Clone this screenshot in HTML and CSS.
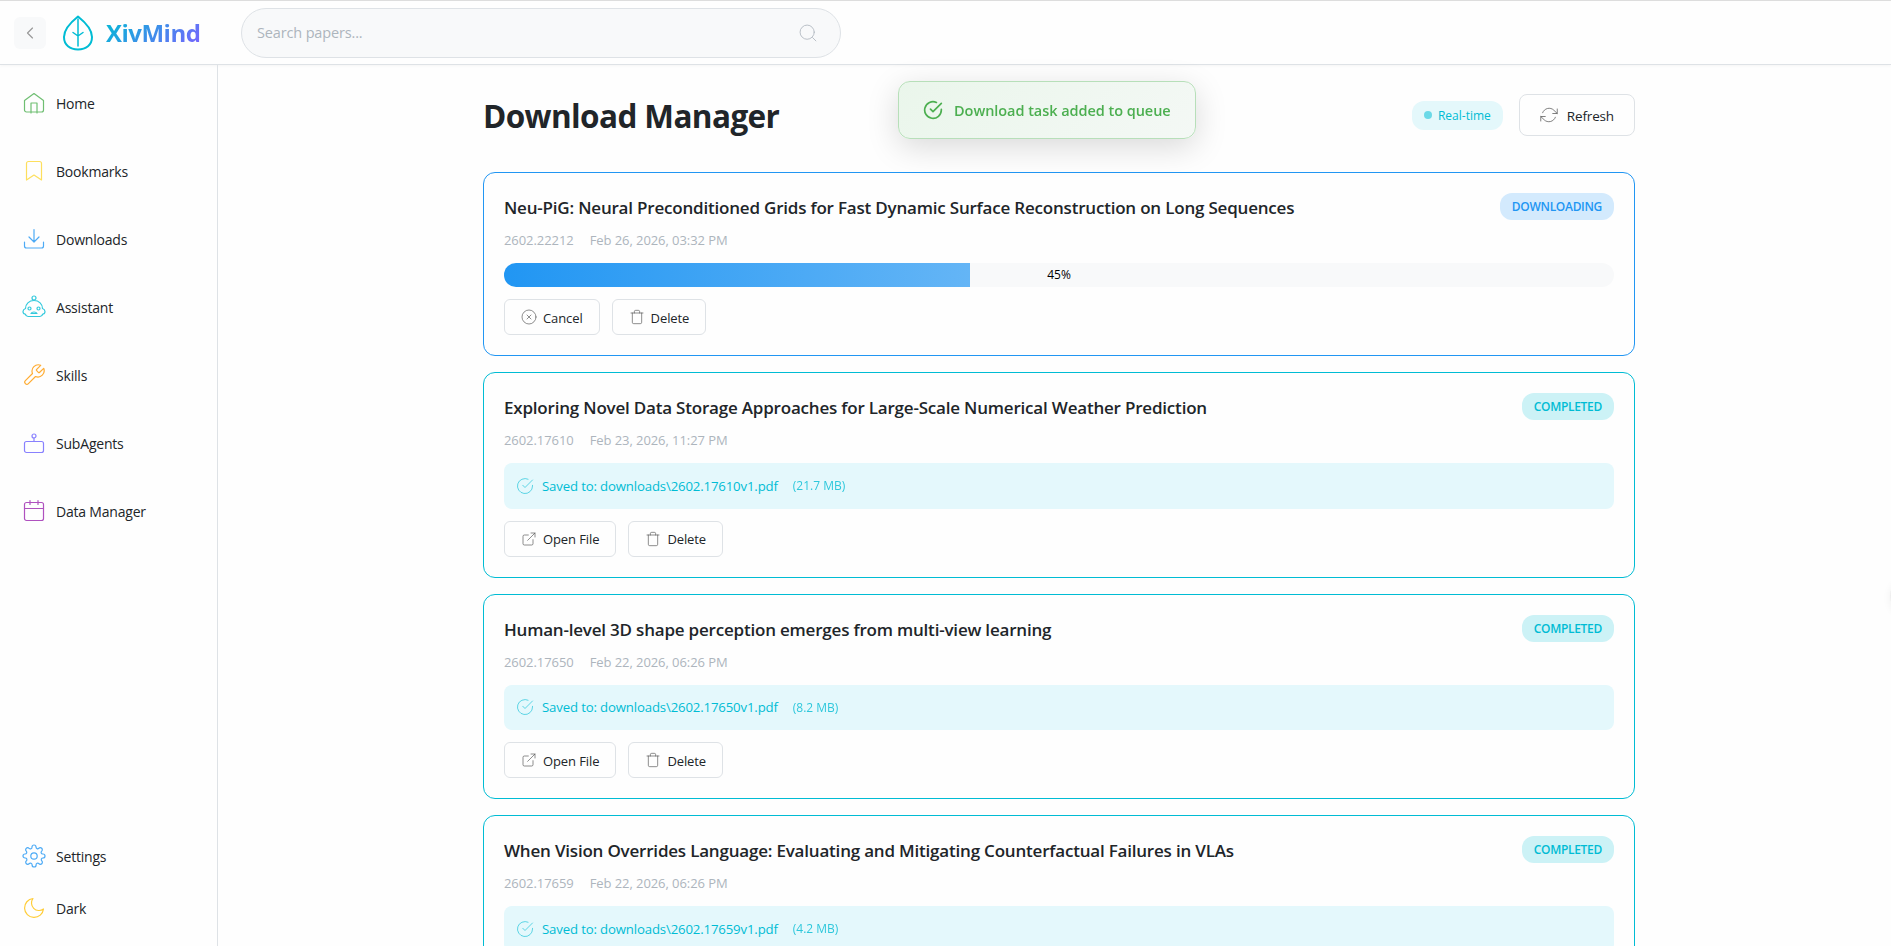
FILE: index.html
```html
<!DOCTYPE html>
<html lang="en">
<head>
<meta charset="utf-8">
<title>XivMind - Download Manager</title>
<link rel="stylesheet" href="styles.css">
</head>
<body>

<!-- shared icons -->
<svg class="sprite" width="0" height="0">
	<symbol id="i-check" viewBox="0 0 24 24"><path d="M22 11.1V12a10 10 0 1 1-5.9-9.1M22 4 12 14l-3-3"/></symbol>
	<symbol id="i-open" viewBox="0 0 24 24"><path d="M18 13v6a2 2 0 0 1-2 2H5a2 2 0 0 1-2-2V8a2 2 0 0 1 2-2h6M15 3h6v6M10 14 21 3"/></symbol>
	<symbol id="i-trash" viewBox="0 0 24 24"><path d="M3 6h18M5 6v14a2 2 0 0 0 2 2h10a2 2 0 0 0 2-2V6M8 6V4a2 2 0 0 1 2-2h4a2 2 0 0 1 2 2v2"/></symbol>
</svg>

<header class="topbar">
	<button class="toggle"><svg viewBox="0 0 24 24" width="20" height="20"><path d="m15 18-6-6 6-6"/></svg></button>
	<div class="logo">
		<svg class="leaf" viewBox="0 0 36 36" width="36" height="36">
			<path d="M18 1.500C13 5.500 4 13 4 22c0 8 6 12.500 14 12.500S32 30 32 22C32 13 23 5.500 18 1.500z" stroke-width="2"/>
			<path d="M18 4v27M18 21l-5-3.500M18 21l5-3.500" stroke-width="1.500"/>
		</svg>
		<span class="brand">XivMind</span>
	</div>
	<div class="search">
		<span class="placeholder">Search papers...</span>
		<svg viewBox="0 0 24 24" width="20" height="20"><circle cx="11" cy="11" r="8.500"/><path d="m21.500 21.500-4-4"/></svg>
	</div>
</header>

<div class="layout">
	<nav class="sidebar">
		<div class="nav-main">
			<a class="nav-item home"><svg viewBox="0 0 24 24"><path d="M2.500 9.500 12 2.500l9.500 7V19a2 2 0 0 1-2 2h-15a2 2 0 0 1-2-2zM9 22V12h6v10"/></svg><span>Home</span></a>
			<a class="nav-item bookmarks"><svg viewBox="0 0 24 24"><path d="m19.500 21-7.500-5-7.500 5V4.500a2 2 0 0 1 2-2h11a2 2 0 0 1 2 2z"/></svg><span>Bookmarks</span></a>
			<a class="nav-item downloads"><svg viewBox="0 0 24 24"><path d="M2.500 15v4a2 2 0 0 0 2 2h15a2 2 0 0 0 2-2v-4M7 10l5 5 5-5M12 15V2.500"/></svg><span>Downloads</span></a>
			<a class="nav-item assistant"><svg viewBox="0 0 24 24"><path d="M12 5.500c-5 0-8.500 3.500-8.500 8-1.500.5-2.500 1.500-2.500 3S2 19 3.200 19c.6 1.800 1.300 2.500 2.800 2.500h12c1.500 0 2.200-.7 2.800-2.500 1.200 0 2.200-1 2.200-2.500s-1-2.500-2.500-3c0-4.500-3.500-8-8.500-8z"/><circle cx="12" cy="3" r="2"/><circle cx="7.500" cy="13.500" r="1.500"/><circle cx="16.500" cy="13.500" r="1.500"/><path d="M9 18.500c1-2 5-2 6 0z"/></svg><span>Assistant</span></a>
			<a class="nav-item skills"><svg viewBox="0 0 24 24"><path d="M14.700 6.300a1 1 0 0 0 0 1.400l1.600 1.600a1 1 0 0 0 1.400 0l4-4a6.300 6.300 0 0 1-8.200 8.200L6.400 20.600a2.120 2.120 0 0 1-3-3L10.500 10.500a6.300 6.300 0 0 1 8.200-8.200z"/></svg><span>Skills</span></a>
			<a class="nav-item subagents"><svg viewBox="0 0 24 24"><rect x="2.500" y="10.500" width="19" height="11" rx="2"/><circle cx="12" cy="5" r="2"/><path d="M12 7v3.500"/></svg><span>SubAgents</span></a>
			<a class="nav-item data"><svg viewBox="0 0 24 24"><rect x="2.500" y="3.500" width="19" height="18" rx="2"/><path d="M2.500 9.500h19M8 1.500v4M16 1.500v4"/></svg><span>Data Manager</span></a>
		</div>
		<div class="nav-foot">
			<a class="nav-item settings"><svg viewBox="0 0 24 24"><circle cx="12" cy="12" r="3.200"/><path d="M19.400 15a1.650 1.650 0 0 0 .33 1.820l.06.06a2 2 0 1 1-2.830 2.830l-.06-.06a1.650 1.650 0 0 0-2.800 1.170V21a2 2 0 0 1-4 0v-.09A1.650 1.650 0 0 0 7.200 19.700l-.06.06a2 2 0 1 1-2.830-2.830l.06-.06A1.650 1.650 0 0 0 3.100 14H3a2 2 0 0 1 0-4h.09A1.650 1.650 0 0 0 4.300 7.200l-.06-.06a2 2 0 1 1 2.830-2.830l.06.06A1.650 1.650 0 0 0 10 3.100V3a2 2 0 0 1 4 0v.09a1.650 1.650 0 0 0 2.800 1.200l.06-.06a2 2 0 1 1 2.830 2.830l-.06.06A1.650 1.650 0 0 0 20.900 10H21a2 2 0 0 1 0 4h-.09a1.650 1.650 0 0 0-1.510 1z"/></svg><span>Settings</span></a>
			<a class="nav-item dark"><svg viewBox="0 0 24 24"><path d="M21.500 13A9.500 9.500 0 1 1 11 2.500 7.500 7.500 0 0 0 21.500 13z"/></svg><span>Dark</span></a>
		</div>
	</nav>

	<main class="content">
		<div class="page-head">
			<h1>Download Manager</h1>
			<div class="head-actions">
				<span class="live"><i class="dot"></i><span>Real-time</span></span>
				<button class="btn refresh"><svg viewBox="0 0 24 24"><path d="M23 4v6h-6M1 20v-6h6M3.500 9a9 9 0 0 1 14.900-3.400L23 10M1 14l4.600 4.400A9 9 0 0 0 20.500 15"/></svg><span>Refresh</span></button>
			</div>
		</div>

		<section class="card downloading">
			<div class="card-head">
				<h3>Neu-PiG: Neural Preconditioned Grids for Fast Dynamic Surface Reconstruction on Long Sequences</h3>
				<span class="status">DOWNLOADING</span>
			</div>
			<div class="meta"><span>2602.22212</span><span>Feb 26, 2026, 03:32 PM</span></div>
			<div class="progress">
				<div class="bar" style="width: 42%"></div>
				<span class="percent">45%</span>
			</div>
			<div class="actions">
				<button class="btn"><svg viewBox="0 0 24 24"><circle cx="12" cy="12" r="10.500"/><path d="m15 9-6 6M9 9l6 6"/></svg><span>Cancel</span></button>
				<button class="btn"><svg><use href="#i-trash"/></svg><span>Delete</span></button>
			</div>
		</section>

		<section class="card completed">
			<div class="card-head">
				<h3>Exploring Novel Data Storage Approaches for Large-Scale Numerical Weather Prediction</h3>
				<span class="status">COMPLETED</span>
			</div>
			<div class="meta"><span>2602.17610</span><span>Feb 23, 2026, 11:27 PM</span></div>
			<div class="saved"><svg><use href="#i-check"/></svg><span class="path">Saved to: downloads\2602.17610v1.pdf</span><span class="size">(21.7 MB)</span></div>
			<div class="actions">
				<button class="btn"><svg><use href="#i-open"/></svg><span>Open File</span></button>
				<button class="btn"><svg><use href="#i-trash"/></svg><span>Delete</span></button>
			</div>
		</section>

		<section class="card completed">
			<div class="card-head">
				<h3>Human-level 3D shape perception emerges from multi-view learning</h3>
				<span class="status">COMPLETED</span>
			</div>
			<div class="meta"><span>2602.17650</span><span>Feb 22, 2026, 06:26 PM</span></div>
			<div class="saved"><svg><use href="#i-check"/></svg><span class="path">Saved to: downloads\2602.17650v1.pdf</span><span class="size">(8.2 MB)</span></div>
			<div class="actions">
				<button class="btn"><svg><use href="#i-open"/></svg><span>Open File</span></button>
				<button class="btn"><svg><use href="#i-trash"/></svg><span>Delete</span></button>
			</div>
		</section>

		<section class="card completed">
			<div class="card-head">
				<h3>When Vision Overrides Language: Evaluating and Mitigating Counterfactual Failures in VLAs</h3>
				<span class="status">COMPLETED</span>
			</div>
			<div class="meta"><span>2602.17659</span><span>Feb 22, 2026, 06:26 PM</span></div>
			<div class="saved"><svg><use href="#i-check"/></svg><span class="path">Saved to: downloads\2602.17659v1.pdf</span><span class="size">(4.2 MB)</span></div>
		</section>
	</main>
</div>

<div class="toast"><svg><use href="#i-check"/></svg><span>Download task added to queue</span></div>
<div class="drawer-handle"></div>

</body>
</html>
```
FILE: styles.css
```css
* { box-sizing: border-box; }

body {
	margin: 0;
	height: 946px;
	overflow: hidden;
	background: #fefefe;
	font-family: "Open Sans", "Noto Sans", sans-serif;
	font-size: 14px;
	color: #212529;
	display: flex;
	flex-direction: column;
}

svg {
	fill: none;
	stroke: currentColor;
	stroke-width: 1;
	stroke-linecap: round;
	stroke-linejoin: round;
	flex: none;
}

.sprite { position: absolute; }

h1, h3 { margin: 0; }

button { font-family: inherit; }

/* top bar */
.topbar {
	flex: none;
	display: flex;
	align-items: center;
	height: 65px;
	padding-left: 14px;
	border-top: 1px solid #ddd;
	border-bottom: 1px solid #dee2e6;
	box-shadow: 0 1px 3px rgba(0,0,0,0.04);
}

.toggle {
	display: flex;
	align-items: center;
	justify-content: center;
	width: 32px;
	height: 32px;
	padding: 0;
	border: none;
	border-radius: 6px;
	background: #f8f9fa;
	color: #999;
}

.toggle svg { stroke-width: 1.4; }

.logo {
	display: flex;
	align-items: center;
	gap: 10px;
	width: 181px;
	margin-left: 14px;
}

.leaf { color: #00bcd4; }

.brand {
	font-size: 24px;
	font-weight: 700;
	letter-spacing: -0.5px;
	background: linear-gradient(135deg, #00bcd4, #7b61ff);
	-webkit-background-clip: text;
	background-clip: text;
	color: transparent;
}

.search {
	display: flex;
	align-items: center;
	justify-content: space-between;
	width: 600px;
	height: 50px;
	padding: 0 22px 0 15px;
	border: 1px solid #dee2e6;
	border-radius: 25px;
	background: #f8f9fa;
	color: #adb5bd;
}

.placeholder { font-size: 14.5px; letter-spacing: -0.15px; }

/* sidebar */
.layout { display: flex; flex: 1; min-height: 0; }

.sidebar {
	flex: none;
	display: flex;
	flex-direction: column;
	justify-content: space-between;
	width: 218px;
	padding: 12px 0 12px 22px;
	border-right: 1px solid #dee2e6;
}

.nav-main { display: flex; flex-direction: column; gap: 16px; }

.nav-item {
	display: flex;
	align-items: center;
	gap: 10px;
	height: 52px;
	font-size: 14px;
	letter-spacing: -0.2px;
}

.nav-item svg { width: 24px; height: 24px; stroke-width: 1.2; opacity: 0.8; }

.home svg { color: #4caf50; }
.bookmarks svg { color: #fdd835; }
.downloads svg { color: #2196f3; }
.assistant svg { color: #00bcd4; }
.skills svg { color: #ff9800; }
.subagents svg { color: #6c63ff; }
.data svg { color: #9c27b0; }
.settings svg { color: #2196f3; }
.dark svg { color: #ffc107; }

/* download list */
.content {
	display: flex;
	flex-direction: column;
	gap: 16px;
	width: 1152px;
	margin-left: 265px;
	padding-top: 29px;
}

.page-head {
	flex: none;
	display: flex;
	align-items: center;
	justify-content: space-between;
	height: 42px;
	margin-bottom: 20px;
}

h1 {
	font-size: 31.5px;
	font-weight: 700;
	line-height: 42px;
	letter-spacing: -0.6px;
	padding-top: 2px;
}

.head-actions { display: flex; align-items: center; gap: 16px; }

.live {
	display: flex;
	align-items: center;
	gap: 6px;
	height: 29px;
	padding: 0 12px;
	border-radius: 12px;
	background: #e4f8fb;
	color: #00bcd4;
	font-size: 12px;
}

.dot {
	width: 8px;
	height: 8px;
	border-radius: 50%;
	background: #6bd9e7;
}

.btn {
	display: flex;
	align-items: center;
	gap: 6px;
	height: 36px;
	padding: 0 16px;
	border: 1px solid #dee2e6;
	border-radius: 6px;
	background: #fefefe;
	color: #212529;
	font-size: 13px;
	letter-spacing: -0.1px;
}

.btn svg { width: 16px; height: 16px; color: #555; }
.btn span { padding-top: 1px; }

.refresh {
	height: 42px;
	padding: 0 20px;
	gap: 9px;
	border-radius: 8px;
	font-size: 13.5px;
	letter-spacing: -0.15px;
}
.refresh svg { width: 18px; height: 18px; }

.card {
	flex: none;
	padding: 20px;
	border: 1px solid #00bcd4;
	border-radius: 12px;
}

.card.downloading { border-color: #2196f3; }

.card-head {
	display: flex;
	justify-content: space-between;
	align-items: flex-start;
	height: 28px;
	margin-bottom: 9px;
}

h3 {
	font-size: 17px;
	font-weight: 600;
	line-height: 29px;
	letter-spacing: -0.2px;
	white-space: nowrap;
}

.status {
	height: 27px;
	padding: 0 12px;
	border-radius: 12px;
	background: #ccf2f6;
	color: #00bcd4;
	font-size: 12px;
	font-weight: 600;
	line-height: 27px;
	letter-spacing: -0.3px;
}

.downloading .status { background: #d3eafd; color: #2196f3; }

.meta {
	display: flex;
	gap: 16px;
	height: 20px;
	margin-bottom: 13px;
	color: #adb5bd;
	font-size: 13px;
	line-height: 20px;
	letter-spacing: -0.07px;
}

.progress {
	position: relative;
	height: 24px;
	margin-bottom: 12px;
	border-radius: 12px;
	background: #f8f9fa;
	overflow: hidden;
}

.bar { height: 100%; background: linear-gradient(90deg, #2196f3, #64b5f6); }

.percent {
	position: absolute;
	inset: 0;
	text-align: center;
	color: #000;
	font-size: 12px;
	line-height: 24px;
}

.saved {
	display: flex;
	align-items: center;
	height: 45.6px;
	margin-bottom: 12px;
	padding: 0 12px;
	border-radius: 8px;
	background: #e4f8fc;
	color: #00bcd4;
	font-size: 13.2px;
	letter-spacing: -0.15px;
}

.saved svg { width: 18px; height: 18px; margin-right: 8px; opacity: 0.8; }
.size { margin-left: 15px; font-size: 12px; letter-spacing: 0; opacity: 0.8; }

.actions { display: flex; gap: 12px; }

/* overlays */
.toast {
	position: fixed;
	left: 898px;
	top: 81px;
	display: flex;
	align-items: center;
	gap: 11px;
	width: 298px;
	height: 58px;
	padding: 0 24px;
	border: 1px solid #b7dfb9;
	border-radius: 12px;
	background: linear-gradient(135deg, #eaf6eb, #f4f8f5);
	box-shadow: 0 8px 32px rgba(0,0,0,0.15);
	color: #4caf50;
	font-size: 14.5px;
	font-weight: 600;
	letter-spacing: -0.05px;
	white-space: nowrap;
}

.toast svg { width: 20px; height: 20px; stroke-width: 2; }

.drawer-handle {
	position: fixed;
	left: 1890px;
	top: 576px;
	width: 40px;
	height: 40px;
	border-radius: 50%;
	background: #eee;
	box-shadow: 0 2px 8px rgba(0,0,0,0.06);
}
```
